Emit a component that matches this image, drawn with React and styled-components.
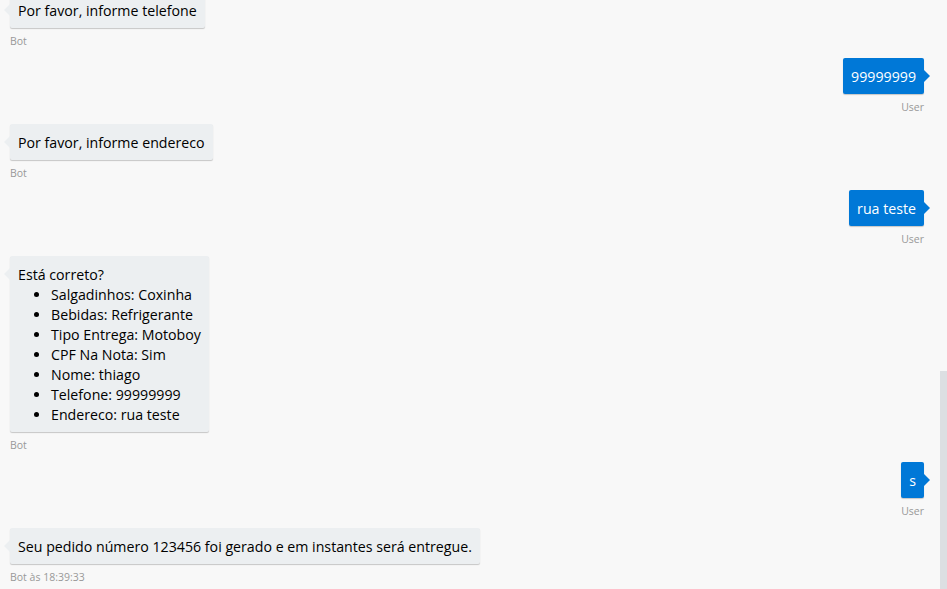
import React from 'react';
import styled, { createGlobalStyle } from 'styled-components';

const GlobalStyle = createGlobalStyle`
  html, body {
    margin: 0;
    padding: 0;
    background: #f8f8f8;
  }
  * {
    box-sizing: border-box;
  }
`;

const ChatWrapper = styled.div`
  display: flex;
  width: 947px;
  height: 589px;
  overflow: hidden;
  background: #f8f8f8;
  font-family: 'Open Sans', 'Liberation Sans', sans-serif;
`;

const MessageGroups = styled.div`
  flex: 1;
  display: flex;
  flex-direction: column;
  justify-content: flex-end;
  overflow: hidden;
  padding: 0 16px 5px 10px;
`;

const MessageWrapper = styled.div`
  display: flex;
  flex-direction: column;
  align-items: ${(p) => (p.$me ? 'flex-end' : 'flex-start')};
  margin-bottom: 10px;
  flex-shrink: 0;

  &:last-child {
    margin-bottom: 0;
  }
`;

const Bubble = styled.div`
  position: relative;
  padding: 9px 8px 7px;
  border-radius: 2px;
  box-shadow: 0 1px 1px 0 rgba(0, 0, 0, 0.2);
  font-size: 14.2px;
  line-height: 20px;
  background: ${(p) => (p.$me ? '#0078d7' : '#eceff1')};
  color: ${(p) => (p.$me ? '#ffffff' : '#000000')};
`;

const Callout = styled.svg`
  position: absolute;
  top: 12px;
  width: 6px;
  height: 12px;
  ${(p) => (p.$me ? 'right: -6px;' : 'left: -6px;')}
  fill: ${(p) => (p.$me ? '#0078d7' : '#eceff1')};
`;

const From = styled.div`
  margin-top: 6px;
  font-size: 10.5px;
  line-height: 14px;
  color: #999999;
`;

const List = styled.ul`
  margin: 0;
  padding-left: 33px;
`;

const Scrollbar = styled.div`
  width: 7px;
  height: 100%;
  flex-shrink: 0;
  display: flex;
  flex-direction: column;
`;

const Thumb = styled.div`
  width: 7px;
  background: #dcdfe2;
`;

const Message = ({ me, from, children }) => (
  <MessageWrapper $me={me}>
    <Bubble $me={me}>
      <Callout $me={me} viewBox="0 0 6 12">
        {me ? <path d="M0 0 L6 6 L0 12 Z" /> : <path d="M6 0 L0 6 L6 12 Z" />}
      </Callout>
      {children}
    </Bubble>
    <From>{from}</From>
  </MessageWrapper>
);

const resumo = [
  'Salgadinhos: Coxinha',
  'Bebidas: Refrigerante',
  'Tipo Entrega: Motoboy',
  'CPF Na Nota: Sim',
  'Nome: thiago',
  'Telefone: 99999999',
  'Endereco: rua teste',
];

const App = () => {
  return (
    <ChatWrapper>
      <GlobalStyle />
      <MessageGroups>
        <Message from="Bot">Por favor, informe telefone</Message>
        <Message me from="User">99999999</Message>
        <Message from="Bot">Por favor, informe endereco</Message>
        <Message me from="User">rua teste</Message>
        <Message from="Bot">
          <div>Está correto?</div>
          <List>
            {resumo.map((item) => (
              <li key={item}>{item}</li>
            ))}
          </List>
        </Message>
        <Message me from="User">s</Message>
        <Message from="Bot às 18:39:33">
          Seu pedido número 123456 foi gerado e em instantes será entregue.
        </Message>
      </MessageGroups>
      <Scrollbar>
        <Thumb style={{ marginTop: 371, height: 218 }} />
      </Scrollbar>
    </ChatWrapper>
  );
};

export default App;
